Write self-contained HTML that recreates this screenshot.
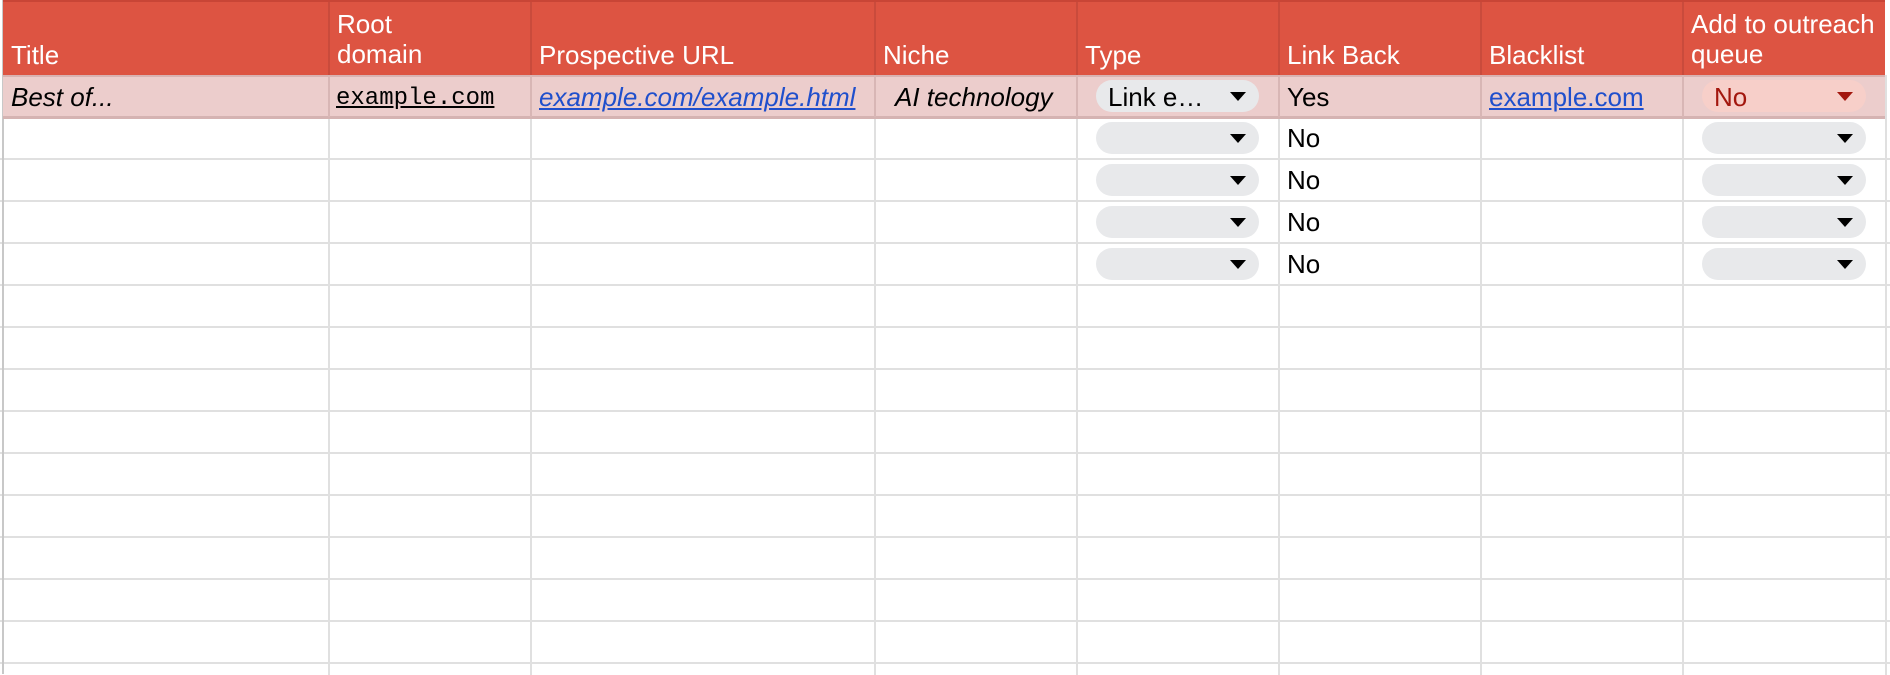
<!DOCTYPE html>
<html><head><meta charset="utf-8"><style>
body{margin:0;width:1890px;height:674px;overflow:hidden;background:#fff;font-family:"Liberation Sans",Arial,sans-serif;font-size:26px;position:relative}
.a{position:absolute}
.hl{position:absolute;left:0;width:1890px;height:2px;background:#e0e0e0}
.vl{position:absolute;top:75px;width:2px;height:600px;background:#e0e0e0}
.hv{position:absolute;top:2px;width:2px;height:73px;background:#c94b3c}
.pv{position:absolute;top:75px;width:2px;height:42px;background:#d8b6b5}
.ht{position:absolute;color:#fff;line-height:30px;white-space:nowrap}
.chip{position:absolute;height:32px;border-radius:16px;background:#e8e9eb}
.arr{position:absolute;width:0;height:0;border-left:8px solid transparent;border-right:8px solid transparent;border-top:9px solid #000}
.t{position:absolute;white-space:nowrap;line-height:30px}
</style></head><body>
<div class="hl" style="top:158px"></div><div class="hl" style="top:200px"></div><div class="hl" style="top:242px"></div><div class="hl" style="top:284px"></div><div class="hl" style="top:326px"></div><div class="hl" style="top:368px"></div><div class="hl" style="top:410px"></div><div class="hl" style="top:452px"></div><div class="hl" style="top:494px"></div><div class="hl" style="top:536px"></div><div class="hl" style="top:578px"></div><div class="hl" style="top:620px"></div><div class="hl" style="top:662px"></div>
<div class="vl" style="left:2px;top:0;height:674px;background:#c8c8c8"></div>
<div class="vl" style="left:328px"></div><div class="vl" style="left:530px"></div><div class="vl" style="left:874px"></div><div class="vl" style="left:1076px"></div><div class="vl" style="left:1278px"></div><div class="vl" style="left:1480px"></div><div class="vl" style="left:1682px"></div><div class="vl" style="left:1885px"></div>
<div class="a" style="left:3px;top:0;width:1882px;height:75px;background:#dd5442"></div>
<div class="a" style="left:3px;top:0;width:1882px;height:2px;background:#c84536"></div>
<div class="a" style="left:3px;top:75px;width:1882px;height:42px;background:#eccdcc"></div>
<div class="a" style="left:3px;top:75px;width:1882px;height:2px;background:#d8b3b2"></div>
<div class="a" style="left:3px;top:116px;width:1882px;height:3px;background:#d5b3b2"></div>
<div class="hv" style="left:328px"></div><div class="hv" style="left:530px"></div><div class="hv" style="left:874px"></div><div class="hv" style="left:1076px"></div><div class="hv" style="left:1278px"></div><div class="hv" style="left:1480px"></div><div class="hv" style="left:1682px"></div>
<div class="pv" style="left:328px"></div><div class="pv" style="left:530px"></div><div class="pv" style="left:874px"></div><div class="pv" style="left:1076px"></div><div class="pv" style="left:1278px"></div><div class="pv" style="left:1480px"></div><div class="pv" style="left:1682px"></div>
<div class="ht" style="left:11px;top:40px">Title</div>
<div class="ht" style="left:337px;top:9px">Root<br>domain</div>
<div class="ht" style="left:539px;top:40px">Prospective URL</div>
<div class="ht" style="left:883px;top:40px">Niche</div>
<div class="ht" style="left:1085px;top:40px">Type</div>
<div class="ht" style="left:1287px;top:40px">Link Back</div>
<div class="ht" style="left:1489px;top:40px">Blacklist</div>
<div class="ht" style="left:1691px;top:9px">Add to outreach<br>queue</div>
<div class="t" style="left:11px;top:82px;font-style:italic">Best of...</div>
<div class="t" style="left:336px;top:84px;font-family:'Liberation Mono',monospace;font-size:24px;text-decoration:underline">example.com</div>
<div class="t" style="left:539px;top:82px;font-style:italic;color:#1f4fcc;text-decoration:underline">example.com/example.html</div>
<div class="t" style="left:895px;top:82px;font-style:italic">AI technology</div>
<div class="t" style="left:1287px;top:82px">Yes</div>
<div class="t" style="left:1489px;top:82px;color:#1f4fcc;text-decoration:underline">example.com</div>
<div class="t" style="left:1287px;top:123px">No</div>
<div class="t" style="left:1287px;top:165px">No</div>
<div class="t" style="left:1287px;top:207px">No</div>
<div class="t" style="left:1287px;top:249px">No</div>
<div class="chip" style="left:1096px;top:80px;width:163px"></div>
<div class="t" style="left:1108px;top:82px">Link e…</div>
<div class="arr" style="left:1230px;top:92px"></div>
<div class="chip" style="left:1702px;top:80px;width:164px;background:#f7cfc9"></div>
<div class="t" style="left:1714px;top:82px;color:#a3170e">No</div>
<div class="arr" style="left:1837px;top:92px;border-top-color:#a3170e"></div>
<div class="chip" style="left:1096px;top:122px;width:163px"></div><div class="arr" style="left:1230px;top:134px"></div>
<div class="chip" style="left:1096px;top:164px;width:163px"></div><div class="arr" style="left:1230px;top:176px"></div>
<div class="chip" style="left:1096px;top:206px;width:163px"></div><div class="arr" style="left:1230px;top:218px"></div>
<div class="chip" style="left:1096px;top:248px;width:163px"></div><div class="arr" style="left:1230px;top:260px"></div>
<div class="chip" style="left:1702px;top:122px;width:164px"></div><div class="arr" style="left:1837px;top:134px"></div>
<div class="chip" style="left:1702px;top:164px;width:164px"></div><div class="arr" style="left:1837px;top:176px"></div>
<div class="chip" style="left:1702px;top:206px;width:164px"></div><div class="arr" style="left:1837px;top:218px"></div>
<div class="chip" style="left:1702px;top:248px;width:164px"></div><div class="arr" style="left:1837px;top:260px"></div>
</body></html>
